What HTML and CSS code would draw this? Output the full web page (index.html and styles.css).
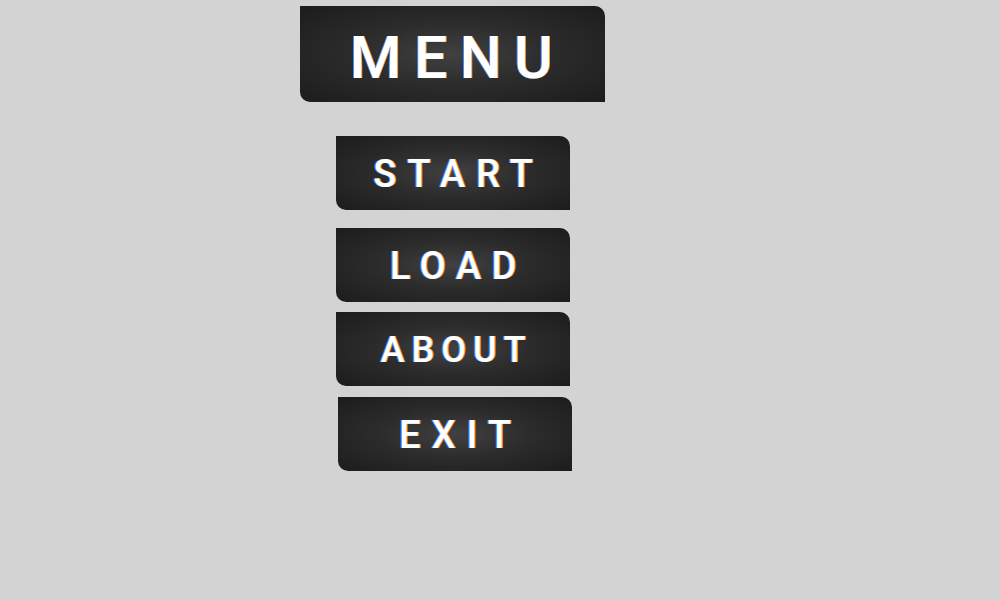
FILE: index.html
```html
<!DOCTYPE html>
<html>
<head>
<meta charset="utf-8">
<link rel="stylesheet" href="styles.css">
</head>
<body>
<div class="menu">
  <div class="title">MENU</div>
  <div class="btn btn-start">START</div>
  <div class="btn btn-load">LOAD</div>
  <div class="btn btn-about">ABOUT</div>
  <div class="btn btn-exit">EXIT</div>
</div>
</body>
</html>
```
FILE: styles.css
```css
html, body {
  margin: 0;
  padding: 0;
  background: #d3d3d3;
  width: 1000px;
  height: 600px;
  overflow: hidden;
}
.menu {
  display: flex;
  flex-direction: column;
  align-items: flex-start;
  margin-left: 300px;
  padding-top: 6px;
}
.title, .btn {
  display: flex;
  align-items: center;
  justify-content: center;
  box-sizing: border-box;
  background: radial-gradient(ellipse at center, #414141 0%, #2c2c2c 45%, #1c1c1c 100%);
  border-radius: 0 10px 0 10px;
  color: #fff;
  font-family: Roboto, "Liberation Sans", sans-serif;
  font-weight: 500;
  text-shadow: -1px 0 #3f8bff, 1px 0 #ff9b2e;
}
.title {
  width: 305px;
  height: 96px;
  font-size: 59px;
  letter-spacing: 12.5px;
  padding-left: 10px;
  padding-top: 6px;
}
.btn {
  width: 234px;
  height: 74px;
  font-size: 38px;
  letter-spacing: 11px;
  padding-left: 11px;
  padding-top: 2px;
  margin-left: 36px;
}
.btn-start { margin-top: 34px; }
.btn-load { margin-top: 18px; letter-spacing: 10.5px; padding-left: 10.5px; }
.btn-about { margin-top: 10px; font-size: 36px; letter-spacing: 7px; padding-left: 7px; }
.btn-exit { margin-top: 11px; margin-left: 38px; }
```
